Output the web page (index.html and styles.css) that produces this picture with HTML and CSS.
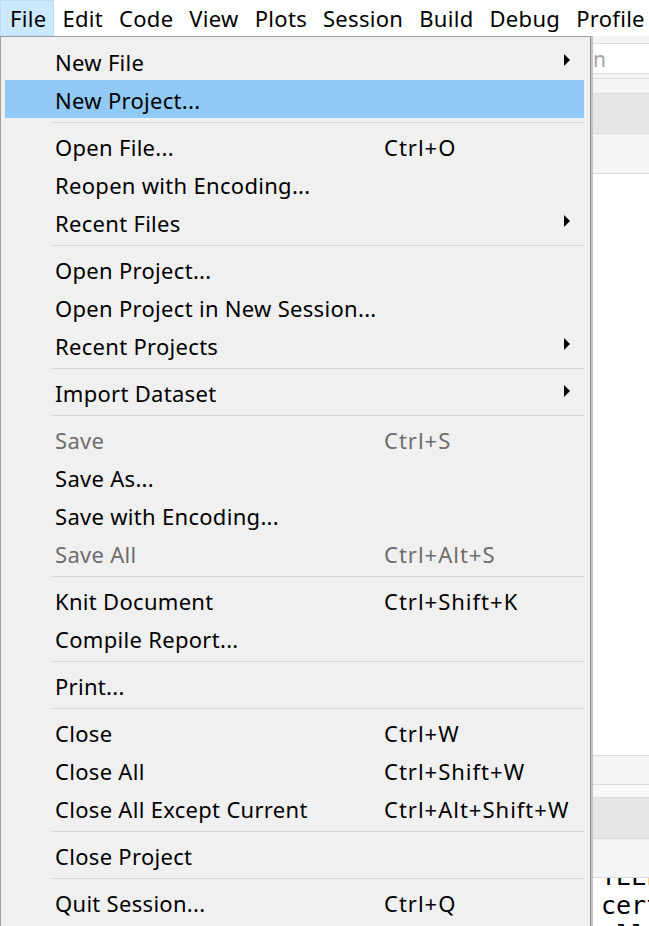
FILE: index.html
```html
<!DOCTYPE html>
<html lang="en">
<head>
<meta charset="utf-8">
<title>RStudio File menu</title>
<link rel="stylesheet" href="styles.css">
</head>
<body>
<div class="app">
  <nav class="menubar">
    <span class="mb-item active">File</span>
    <span class="mb-item">Edit</span>
    <span class="mb-item">Code</span>
    <span class="mb-item">View</span>
    <span class="mb-item">Plots</span>
    <span class="mb-item">Session</span>
    <span class="mb-item">Build</span>
    <span class="mb-item">Debug</span>
    <span class="mb-item">Profile</span>
  </nav>
  <div class="workspace">
    <div class="toolbar"><div class="search"><span class="search-text">Go to file/function</span></div></div>
    <div class="band b-light b-thin"></div>
    <div class="band b-dark"></div>
    <div class="band b-light"></div>
    <div class="editor"></div>
    <div class="band b-light b-mid"></div>
    <div class="band b-pale b-small"></div>
    <div class="band b-dark b-tall"></div>
    <div class="band b-light b-med"></div>
    <div class="console">
      <div class="code-block">
        <div class="code">TELLT</div>
        <div class="code">certain</div>
        <div class="code">all</div>
      </div>
    </div>
  </div>

  <div class="dropdown">
    <div class="item"><span class="label">New File</span><span class="key"></span><span class="arrow"></span></div>
    <div class="item hl"><span class="label">New Project...</span><span class="key"></span></div>
    <div class="sep"></div>
    <div class="item"><span class="label">Open File...</span><span class="key">Ctrl+O</span></div>
    <div class="item"><span class="label">Reopen with Encoding...</span><span class="key"></span></div>
    <div class="item"><span class="label">Recent Files</span><span class="key"></span><span class="arrow"></span></div>
    <div class="sep"></div>
    <div class="item"><span class="label">Open Project...</span><span class="key"></span></div>
    <div class="item"><span class="label">Open Project in New Session...</span><span class="key"></span></div>
    <div class="item"><span class="label">Recent Projects</span><span class="key"></span><span class="arrow"></span></div>
    <div class="sep"></div>
    <div class="item"><span class="label">Import Dataset</span><span class="key"></span><span class="arrow"></span></div>
    <div class="sep"></div>
    <div class="item disabled"><span class="label">Save</span><span class="key">Ctrl+S</span></div>
    <div class="item"><span class="label">Save As...</span><span class="key"></span></div>
    <div class="item"><span class="label">Save with Encoding...</span><span class="key"></span></div>
    <div class="item disabled"><span class="label">Save All</span><span class="key">Ctrl+Alt+S</span></div>
    <div class="sep"></div>
    <div class="item"><span class="label">Knit Document</span><span class="key">Ctrl+Shift+K</span></div>
    <div class="item"><span class="label">Compile Report...</span><span class="key"></span></div>
    <div class="sep"></div>
    <div class="item"><span class="label">Print...</span><span class="key"></span></div>
    <div class="sep"></div>
    <div class="item"><span class="label">Close</span><span class="key">Ctrl+W</span></div>
    <div class="item"><span class="label">Close All</span><span class="key">Ctrl+Shift+W</span></div>
    <div class="item"><span class="label">Close All Except Current</span><span class="key">Ctrl+Alt+Shift+W</span></div>
    <div class="sep"></div>
    <div class="item"><span class="label">Close Project</span><span class="key"></span></div>
    <div class="sep"></div>
    <div class="item"><span class="label">Quit Session...</span><span class="key">Ctrl+Q</span></div>
  </div>
</div>
</body>
</html>
```

FILE: styles.css
```css
* { box-sizing: border-box; }
html, body { margin: 0; padding: 0; }
body {
  width: 649px;
  height: 926px;
  overflow: hidden;
  background: #ffffff;
  font-family: "Noto Sans", "DejaVu Sans", sans-serif;
  font-size: 22px;
  letter-spacing: 0.3px;
  color: #000;
}
.app {
  position: relative;
  width: 649px;
  height: 926px;
  display: flex;
  flex-direction: column;
}
.menubar {
  height: 36px;
  display: flex;
  align-items: stretch;
  background: #fff;
  white-space: nowrap;
}
.mb-item {
  display: flex;
  align-items: center;
  padding: 1px 8px 0 8px;
  line-height: 35px;
}
.mb-item.active {
  padding-left: 10px;
  padding-right: 8px;
  background: #cce8ff;
  box-shadow: inset 0 0 0 1px #b9dcf8;
}
.workspace {
  flex: 1;
  display: flex;
  flex-direction: column;
  overflow: hidden;
}
.toolbar {
  height: 43px;
  flex: none;
  background: #f3f4f5;
  padding-top: 7px;
  border-bottom: 1px solid #dcdcdc;
}
.search {
  height: 31px;
  background: #fff;
  border-top: 1px solid #dcdcdc;
  border-bottom: 1px solid #dcdcdc;
  padding-left: 427px;
  display: flex;
  align-items: center;
  white-space: nowrap;
}
.search-text {
  color: #a5a5a5;
  font-size: 21px;
  letter-spacing: 0;
}
.band { flex: none; border-bottom: 1px solid #d9dadb; height: 40px; }
.b-light { background: #f3f5f7; }
.b-dark { background: #e5e6e8; }
.b-pale { background: #f7f8f9; }
.b-thin { height: 15px; }
.b-mid { height: 30px; border-top: 1px solid #d9dadb; }
.b-small { height: 13px; }
.b-tall { height: 41px; }
.b-med { height: 39px; }
.editor { flex: none; height: 581px; background: #fff; }
.console {
  flex: 1;
  background: #fff;
  padding-left: 601px;
  overflow: hidden;
}
.code-block { margin-top: -16px; }
.code {
  font-family: "DejaVu Sans Mono", "Liberation Mono", monospace;
  font-size: 25px;
  letter-spacing: 0;
  line-height: 29px;
  white-space: nowrap;
}
.dropdown {
  position: absolute;
  left: 0;
  top: 36px;
  width: 591px;
  height: 900px;
  background: #f0f0f0;
  border: 1px solid #a0a0a0;
  border-right: 1px solid #8c8c8c;
  box-shadow: 2px 0 0 #c4c4c4;
  padding: 5px 6px 0 4px;
}
.item {
  height: 38px;
  display: grid;
  grid-template-columns: 329px 1fr 20px;
  align-items: center;
  padding: 2px 14px 0 50px;
  white-space: nowrap;
  line-height: 36px;
}
.item.hl { background: #91c9f7; }
.item.disabled { color: #6d6d6d; }
.key { letter-spacing: 1px; }
.arrow {
  justify-self: end;
  width: 0;
  height: 0;
  border-left: 6px solid #000;
  border-top: 6px solid transparent;
  border-bottom: 6px solid transparent;
  margin-top: -4px;
}
.sep {
  height: 1px;
  margin: 4px 0 4px 46px;
  background: #d7d7d7;
}
```
